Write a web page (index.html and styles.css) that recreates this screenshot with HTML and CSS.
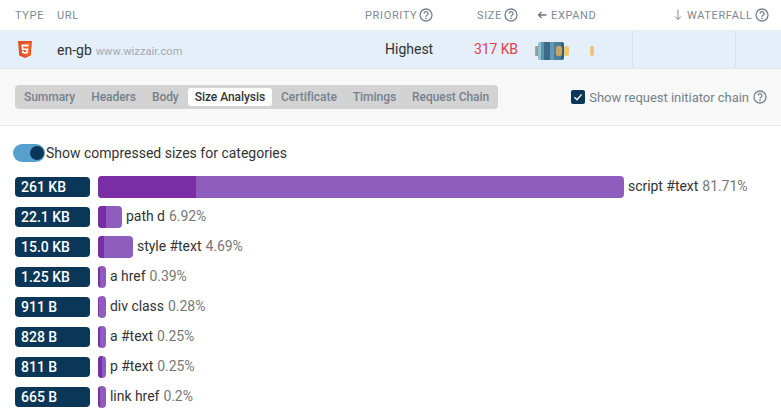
FILE: index.html
```html
<!DOCTYPE html>
<html lang="en">
<head>
<meta charset="utf-8">
<title>Size Analysis</title>
<link rel="stylesheet" href="styles.css">
</head>
<body>
<svg class="defs" width="0" height="0" aria-hidden="true">
  <symbol id="help" viewBox="0 0 14 14">
    <circle cx="7" cy="7" r="6" fill="none" stroke="currentColor" stroke-width="1.3"/>
    <path d="M5.1 5.5a1.95 1.95 0 1 1 2.9 1.7c-.7.4-1 .7-1 1.5" fill="none" stroke="currentColor" stroke-width="1.3"/>
    <circle cx="7" cy="10.4" r=".8" fill="currentColor"/>
  </symbol>
</svg>
<header class="head">
  <div class="h-type">TYPE</div>
  <div class="h-url">URL</div>
  <div class="h-priority">PRIORITY<svg class="help"><use href="#help"/></svg></div>
  <div class="h-size">SIZE<svg class="help"><use href="#help"/></svg></div>
  <div class="h-expand"><svg class="arrow" viewBox="0 0 10 10"><path d="M9.5 5H1.5M4.5 2 1.5 5l3 3" fill="none" stroke="currentColor" stroke-width="1.3"/></svg>EXPAND</div>
  <div class="h-waterfall"><svg class="arrow-d" viewBox="0 0 10 12"><path d="M5 .5v10M2 7.5l3 3 3-3" fill="none" stroke="currentColor" stroke-width="1"/></svg>WATERFALL<svg class="help"><use href="#help"/></svg></div>
</header>
<section class="row">
  <div class="c-type">
    <svg class="html5" viewBox="0 0 14 17">
      <path d="M0 0h14l-1.3 14.6L7 17l-5.7-2.4z" fill="#e44d26"/>
      <path d="M7 1.2h5.7l-1.1 12.5L7 15.6z" fill="#f16529"/>
      <path d="M3.3 3.5h7.4l-.2 1.9H5.3l.2 2h4.8l-.4 4.6L7 13l-2.9-1-.2-2.3h1.8l.1 1.1 1.2.4 1.2-.4.1-1.9H3.8z" fill="#fff"/>
    </svg>
  </div>
  <div class="c-url"><span class="page">en-gb</span><span class="domain">www.wizzair.com</span></div>
  <div class="c-priority">Highest</div>
  <div class="c-size">317 KB</div>
  <div class="c-chart">
    <span class="mini">
      <span class="m-a"></span><span class="m-b"></span><span class="m-c"></span><span class="m-d"></span><span class="m-e"></span>
    </span>
  </div>
  <div class="c-grid"></div>
  <div class="c-last"></div>
</section>
<section class="panel">
  <nav class="tabs">
    <span class="tab">Summary</span>
    <span class="tab">Headers</span>
    <span class="tab">Body</span>
    <span class="tab active">Size Analysis</span>
    <span class="tab">Certificate</span>
    <span class="tab">Timings</span>
    <span class="tab">Request Chain</span>
  </nav>
  <div class="chain">
    <span class="check"><svg viewBox="0 0 14 14"><path d="M3.5 7.3 6 9.8l4.6-5.4" fill="none" stroke="#fff" stroke-width="1.4"/></svg></span>
    <span>Show request initiator chain</span>
    <svg class="help"><use href="#help"/></svg>
  </div>
</section>
<main class="analysis">
  <div class="toggle-row">
    <span class="toggle"><span class="knob"></span></span>
    <span>Show compressed sizes for categories</span>
  </div>
  <ul class="bars">
    <li class="bar-row"><span class="badge">261 KB</span><span class="bar" style="width:526px"><span class="fill" style="width:98px"></span></span><span class="name">script #text</span><span class="pct">81.71%</span></li>
    <li class="bar-row"><span class="badge">22.1 KB</span><span class="bar" style="width:24px"><span class="fill" style="width:8px"></span></span><span class="name">path d</span><span class="pct">6.92%</span></li>
    <li class="bar-row"><span class="badge">15.0 KB</span><span class="bar" style="width:35px"><span class="fill" style="width:6px"></span></span><span class="name">style #text</span><span class="pct">4.69%</span></li>
    <li class="bar-row"><span class="badge">1.25 KB</span><span class="bar" style="width:8px"><span class="fill" style="width:2px"></span></span><span class="name">a href</span><span class="pct">0.39%</span></li>
    <li class="bar-row"><span class="badge">911 B</span><span class="bar" style="width:8px"><span class="fill" style="width:1px"></span></span><span class="name">div class</span><span class="pct">0.28%</span></li>
    <li class="bar-row"><span class="badge">828 B</span><span class="bar" style="width:8px"><span class="fill" style="width:2px"></span></span><span class="name">a #text</span><span class="pct">0.25%</span></li>
    <li class="bar-row"><span class="badge">811 B</span><span class="bar" style="width:8px"><span class="fill" style="width:4px"></span></span><span class="name">p #text</span><span class="pct">0.25%</span></li>
    <li class="bar-row"><span class="badge">665 B</span><span class="bar" style="width:8px"><span class="fill" style="width:2px"></span></span><span class="name">link href</span><span class="pct">0.2%</span></li>
  </ul>
</main>
</body>
</html>
```
FILE: styles.css
```css
* { box-sizing: border-box; }
html, body { margin: 0; padding: 0; }
body {
  width: 781px;
  height: 416px;
  overflow: hidden;
  background: #fff;
  font-family: Roboto, "Liberation Sans", sans-serif;
  font-size: 14px;
  color: #333;
}
.defs { display: block; height: 0; }

.head {
  display: grid;
  grid-template-columns: 42px 308px 112px 60px 136px 1fr;
  height: 31px;
  padding-left: 15px;
  align-items: center;
  border-bottom: 1px solid #e9edf1;
  font-size: 11px;
  letter-spacing: .65px;
  color: #7d8a96;
}
.head > div { display: flex; align-items: center; }
.help { width: 14px; height: 14px; margin-left: 2px; color: #75828e; flex: none; }
.arrow { width: 10px; height: 10px; margin-right: 4px; color: #6b7680; }
.arrow-d { width: 10px; height: 12px; margin-right: 4px; color: #7d8a96; }

.row {
  display: flex;
  height: 38px;
  align-items: center;
  background: #e4eff9;
  border-bottom: 1px solid #dfe6ed;
}
.c-type { width: 57px; padding-left: 18px; display: flex; }
.html5 { width: 14px; height: 17px; }
.c-url { width: 328px; }
.page { color: #333; font-size: 14px; }
.domain { margin-left: 4px; color: #a3a9af; font-size: 11px; letter-spacing: .1px; }
.c-priority { width: 89px; color: #333; font-size: 14px; padding-bottom: 2px; }
.c-size { width: 61px; color: #e4404b; font-size: 14px; padding-bottom: 2px; letter-spacing: -.1px; }
.c-chart { width: 97px; align-self: stretch; display: flex; align-items: center; }
.c-grid { width: 103px; align-self: stretch; border-left: 1px solid #d8e3ee; }
.c-last { flex: 1; align-self: stretch; border-left: 1px solid #d8e3ee; }
.mini { position: relative; display: block; width: 60px; height: 18px; }
.mini > span { position: absolute; }
.m-a { left: 0; top: 5px; width: 4px; height: 10px; border-radius: 1px; background: linear-gradient(90deg, #8cb98f, #b36fa8); }
.m-b {
  left: 3px; top: 1px; width: 26px; height: 18px; border-radius: 2px;
  background: linear-gradient(90deg, #8fc0cc 0 3px, #5f93ad 3px 6px, #3d6b87 6px 12px, #6498b4 12px 16px, #4c7f9c 16px 23px, #34607c 23px 26px);
}
.m-c { left: 21px; top: 5px; width: 6px; height: 10px; border-radius: 2px; background: #c9a464; }
.m-d { left: 29px; top: 5px; width: 5px; height: 10px; border-radius: 2px; background: #f1c476; }
.m-e { left: 55px; top: 5px; width: 4px; height: 10px; border-radius: 2px; background: #f1c476; }

.panel {
  display: flex;
  height: 57px;
  align-items: center;
  justify-content: space-between;
  padding: 0 14px 0 15px;
  background: #f8f8f8;
  border-bottom: 1px solid #e8e8e8;
}
.tabs {
  display: flex;
  height: 24px;
  align-items: center;
  gap: 2px;
  padding: 0 2px;
  background: #d3d3d3;
  border-radius: 4px;
  font-size: 12px;
  font-weight: 500;
  letter-spacing: -.05px;
  color: #75818d;
}
.tab { padding: 0 7px; height: 18px; line-height: 18px; }
.active { background: #fff; color: #333; border-radius: 3px; }
.chain { display: flex; align-items: center; color: #75818d; font-size: 13px; letter-spacing: -.03px; }
.check { width: 14px; height: 14px; margin-right: 4px; border-radius: 2px; background: #0a3657; display: block; }
.check svg { display: block; width: 14px; height: 14px; }
.chain .help { margin-left: 4px; }

.analysis { padding: 0 15px; }
.toggle-row {
  display: flex;
  align-items: center;
  height: 18px;
  margin-top: 18px;
  font-size: 14px;
  color: #333;
}
.toggle {
  position: relative;
  width: 32px;
  height: 18px;
  margin-left: -2px;
  margin-right: 1px;
  border-radius: 9px;
  background: #57a0cd;
}
.knob { position: absolute; right: 1px; top: 2px; width: 14px; height: 14px; border-radius: 50%; background: #0a3657; }
.bars { list-style: none; margin: 14px 0 0; padding: 0; }
.bar-row { display: flex; align-items: center; height: 22px; margin-bottom: 8px; font-size: 14px; letter-spacing: -.04px; }
.badge {
  width: 75px;
  height: 20px;
  line-height: 20px;
  margin-right: 8px;
  padding-left: 6px;
  border-radius: 4px;
  background: #0a3657;
  color: #fff;
  font-weight: 500;
  font-size: 14px;
  letter-spacing: 0;
}
.bar { display: block; height: 22px; margin-right: 4px; border-radius: 4px; overflow: hidden; background: #8e5dbd; flex: none; }
.fill { display: block; height: 100%; background: #7a2da4; }
.name { color: #333; padding-bottom: 2px; }
.pct { margin-left: 4px; color: #777; padding-bottom: 2px; }
```
